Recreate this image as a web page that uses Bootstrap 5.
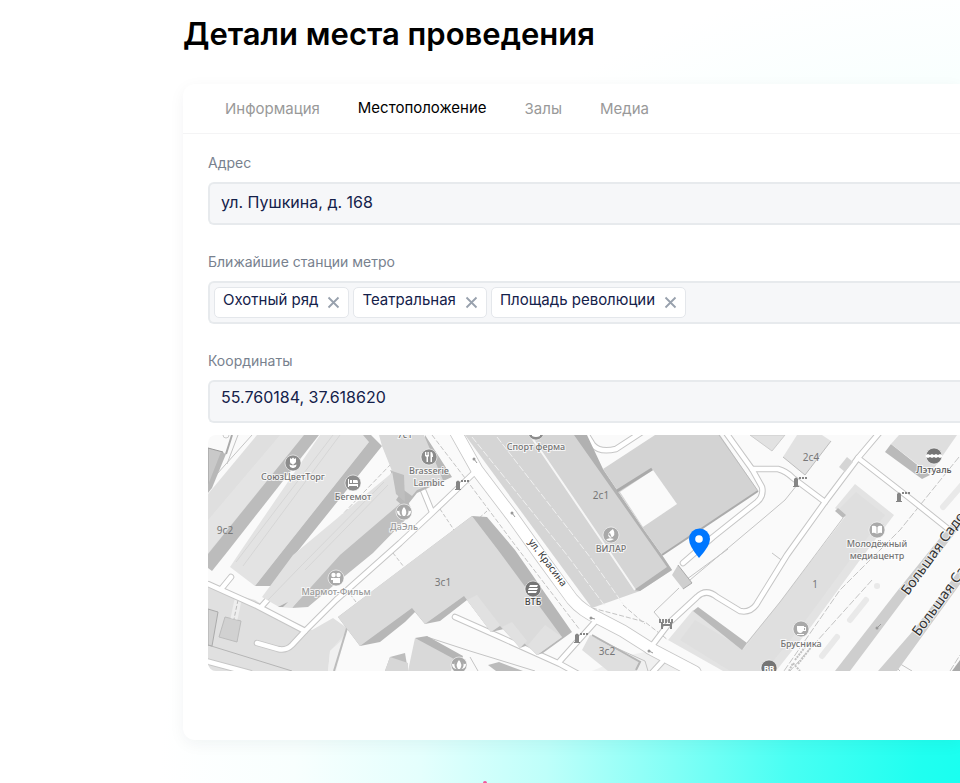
<!DOCTYPE html>
<html lang="ru">
<head>
<meta charset="utf-8">
<meta name="viewport" content="width=device-width, initial-scale=1">
<title>Детали места проведения</title>
<link href="https://cdn.jsdelivr.net/npm/bootstrap@5.3.0/dist/css/bootstrap.min.css" rel="stylesheet">
<style>
  body { font-family: Inter, "Noto Sans", sans-serif; background: #fff; color: #000; overflow-x: hidden; }
  .venue-page { min-height: 100vh; padding: 12px 0 0 183px;
    background: radial-gradient(840px 820px at calc(100% + 40px) 100%, #14fff0 0, #20fff0 10%, #48fff3 25%, #82fff6 39%, #beFFfa 54%, #e4fffd 69%, #f8fffe 84%, #fff 100%); }
  .venue-title { font-size: 31px; line-height: 44px; font-weight: 600; margin-bottom: 28px; white-space: nowrap; }
  .venue-card { border: 0; border-radius: 12px 0 0 12px; box-shadow: 0 4px 16px rgba(0, 40, 50, .05); padding-bottom: 69px; }
  .venue-tabs { gap: 38px; height: 50px; padding-left: 42px; border-bottom: 1px solid #f4f4f5; }
  .venue-tabs .nav-link { padding: 0; font-size: 15px; line-height: 24px; color: #999; }
  .venue-tabs .nav-link.active { color: #000; padding-bottom: 2px; }
  .venue-form { padding: 18px 0 0 25px; }
  .field-label { display: block; font-size: 14px; line-height: 22px; color: #78818e; margin-bottom: 8px; }
  .field-box, .field-box:focus { height: 43px; border: 2px solid #e7eaed; border-right: 0; border-radius: 6px 0 0 6px; background: #f6f7f9; color: #14214a; font-size: 16px; line-height: 24px; box-shadow: none; }
  input.field-box { padding: 3px 11px 6px; }
  input.coords { padding-bottom: 12px; }
  .field-group { margin-bottom: 26px; }
  .field-group.last { margin-bottom: 12px; }
  .tags-box { gap: 4px; padding: 4px; }
  .tag-item { height: 31px; border: 1px solid #e4e7eb; border-radius: 5px; background: #fff; padding: 0 8px; gap: 9px; white-space: nowrap; font-size: 15px; }
  .tag-text { padding-bottom: 5px; }
  .tag-remove { border: 0; background: none; padding: 0; width: 13px; height: 29px; line-height: 0; }
  .map-frame { overflow: hidden; border-radius: 8px 0 0 8px; }
  .venue-map { display: block; width: 100%; height: 236px; }
  .loader-tip { width: 4px; height: 2px; margin-left: 300px; border-radius: 2px 2px 0 0; background: #f0569a; }
</style>
</head>
<body>
<main class="venue-page d-flex flex-column">
  <h1 class="venue-title">Детали места проведения</h1>
  <section class="card venue-card">
    <ul class="nav flex-nowrap align-items-center venue-tabs">
      <li class="nav-item"><a class="nav-link" href="#info">Информация</a></li>
      <li class="nav-item"><a class="nav-link active" aria-current="page" href="#place">Местоположение</a></li>
      <li class="nav-item"><a class="nav-link" href="#halls">Залы</a></li>
      <li class="nav-item"><a class="nav-link" href="#media">Медиа</a></li>
    </ul>
    <form class="venue-form">
      <div class="field-group">
        <label class="field-label" for="address">Адрес</label>
        <input class="form-control field-box" id="address" type="text" value="ул. Пушкина, д. 168">
      </div>
      <div class="field-group" role="group" aria-labelledby="metro-label">
        <span class="field-label" id="metro-label">Ближайшие станции метро</span>
        <div class="field-box tags-box d-flex align-items-center">
          <span class="tag-item d-flex align-items-center"><span class="tag-text">Охотный ряд</span><button class="tag-remove" type="button" aria-label="Удалить Охотный ряд"><svg width="13" height="13" viewBox="0 0 13 13" stroke="#98a1ad" stroke-width="1.8"><path d="M1.5 1.5l10 10M11.500 1.500l-10 10"/></svg></button></span>
          <span class="tag-item d-flex align-items-center"><span class="tag-text">Театральная</span><button class="tag-remove" type="button" aria-label="Удалить Театральная"><svg width="13" height="13" viewBox="0 0 13 13" stroke="#98a1ad" stroke-width="1.8"><path d="M1.5 1.5l10 10M11.500 1.500l-10 10"/></svg></button></span>
          <span class="tag-item d-flex align-items-center"><span class="tag-text">Площадь революции</span><button class="tag-remove" type="button" aria-label="Удалить Площадь революции"><svg width="13" height="13" viewBox="0 0 13 13" stroke="#98a1ad" stroke-width="1.8"><path d="M1.5 1.5l10 10M11.500 1.500l-10 10"/></svg></button></span>
        </div>
      </div>
      <div class="field-group last">
        <label class="field-label" for="coords">Координаты</label>
        <input class="form-control field-box coords" id="coords" type="text" value="55.760184, 37.618620">
      </div>
      <div class="map-frame">
      <svg class="venue-map" viewBox="208 435 752 236" preserveAspectRatio="xMinYMin slice" role="img" aria-label="Карта места проведения">
        <defs>
          <g id="barrier"><path d="M-2 4v-7q2-3 4 0v7h1v1h-6v-1z" fill="#858585"/><path d="M3-4h9" stroke="#858585" stroke-width="2" stroke-dasharray="2 1"/></g>
          <path id="s-krasina" d="M454 429L477 470L512 516L542 558L572 599Q582 611 600 619L623 631L653 650L695 672"/>
          <g id="lanes">
            <path d="M208 584L257 606L305 631L292 645Q286 651 278 649L257 643"/>
            <path d="M305 631L336 600L400 543L432 513L477 470"/><path d="M432 512L423 490"/>
            <path d="M222 588L231 577M262 606L270 597"/>
            <path d="M455 617L500 637L560 664L580 675M560 661L594 623"/>
            <path d="M724 430L752 469L762 487Q764 496 757 502L713 537L683 563"/>
            <path d="M752 469L778 469Q786 471 793 478L825 502"/>
            <path d="M880 432L858 458L825 502L787 555L756 605Q750 613 740 611L717 597Q706 588 697 597L670 622L648 651"/>
            <path d="M858 458L912 500L947 528"/>
            <path d="M585 432L593 445Q600 453 616 449L642 432"/>
            <path d="M206 661L250 673M650 675L662 662"/>
          </g>
        </defs>
        <rect x="208" y="435" width="1600" height="236" fill="#fafafa"/>

        <!-- green areas and courtyards -->
        <path fill="#e0e0e0" d="M208 587L255 600L273 612L312 630L333 618L347 628L342 640L330 651L328 671H208z"/>
        <path fill="#e9e9e9" d="M330 651L346 632L336 671H328zM592 671L690 671L655 650L630 655z" opacity=".6"/>
        <path d="M347 628L334 671" stroke="#bcbcbc" stroke-width="2"/>
        <path d="M208 645L292 671" stroke="#b5b5b5" fill="none"/>
        <path d="M208 609L218 612L212 646L208 645z" fill="#d2d2d2" stroke="#aaa"/>
        <path d="M225 617L241 621L237 642L219 637z" fill="#d1d1d1" stroke="#bcbcbc"/>
        <path d="M238 600L234 619" stroke="#eee" stroke-width="7"/><path d="M238 600L234 619" stroke="#bbb" stroke-dasharray="4 2"/>

        <!-- thin paths -->
        <g fill="none" stroke="#c4c4c4" stroke-width="1">
          <path d="M208 484L252 435M227 464L238 435M379 507L394 466"/>
          <path d="M310 548L392 463M432 435L465 478L515 545L580 630" stroke-dasharray="5 2"/>
          <path d="M440 509L454 530M487 511L466 530M350 594L362 610M393 553L404 567" stroke-dasharray="4 2"/>
          <path d="M592 608L615 614L645 622L668 640M623 605L645 624" stroke-dasharray="5 2"/>
          <path d="M683 582L728 549M690 580L765 517L785 500L797 485M679 588L654 612L660 619"/>
          <path d="M959 457L900 530L840 590L784 671M872 580L790 671M770 435L790 420M950 671L960 655" stroke-dasharray="7 2"/>
          <path d="M897 662L912 671M900 671l-8-8M772 553l12 9"/>
          <path d="M427 637L470 651L535 671M470 657L478 671M592 637L645 661L648 671"/>
        </g>

        <!-- lanes with thin kerbs -->
        <g fill="none" stroke-linecap="round" stroke-linejoin="round">
          <use href="#lanes" stroke="#c6c6c6" stroke-width="6.500"/><use href="#s-krasina" stroke="#c6c6c6" stroke-width="13"/>
          <use href="#lanes" stroke="#fff" stroke-width="4.500"/><use href="#s-krasina" stroke="#fff" stroke-width="11.500"/>
        </g>

        <!-- western blocks -->
        <path d="M208 448L223 452L211 486L208 486z" fill="#c9c9c9" stroke="#999"/><path d="M221 452L226 454L212 488L208 493V485z" fill="#b8b8b8"/><path d="M226 454L232 435" stroke="#aaa" stroke-width="2"/><circle cx="226" cy="435" r="3" fill="none" stroke="#ccc"/>
        <path d="M257 435H305L208 556V494z" fill="#dfdfdf"/><path d="M280 435H304L208 553V520z" fill="#e4e4e4"/>
        <path d="M304 435H319L228 551L212 571L208 568V554z" fill="#bcbcbc"/>
        <path d="M320 435H370L369 442L281 553L255 586L230 567L240 552z" fill="#e3e3e3"/>
        <path d="M333 435L236 562M340 435L243 566" stroke="#d6d6d6" fill="none"/>
        <path d="M363 435H371L382 446L297 552L273 586H255L281 553L369 442z" fill="#bababa"/>
        <path d="M390 470L396 472L405 490L410 507V515L373 553L340 580L308 607L292 608L340 545L400 490z" fill="#bfbfbf"/>
        <path d="M393 472L399 491L402 502L340 555L292 608L279 607L262 597L293 555z" fill="#e2e2e2"/>
        <path d="M384 482L300 567L268 600M388 485L305 570" stroke="#d6d6d6" fill="none"/>
        <path d="M278 607L288 602L283 607z" fill="#b0b0b0"/>
        <path d="M425 435L452 477L417 493L405 508L396 500L404 488L423 480z" fill="#b8b8b8"/>
        <path d="M379 435H424L443 480L417 490L412 496L401 488L392 471L382 446z" fill="#d9d9d9"/>
        <path d="M392 471L404 475L405 502L396 494z" fill="#bebebe"/>

        <!-- building 3с1 -->
        <path d="M472 516L487 517L515 550L572 632L543 653L537 655L528 645L520 648L504 629L491 632L467 600L440 621L425 624L415 612L405 622L380 642L360 646L338 617z" fill="#b7b7b7"/>
        <path d="M472 516L498 550L562 637L537 655L524 643L520 648L500 626L491 632L464 596L425 624L412 608L360 646L338 617L400 570L420 555z" fill="#dbdbdb"/>
        <path d="M477 595L500 625L491 632L467 600zM512 622L527 641L520 648L502 627zM545 625L562 637L537 655L528 645z" fill="#e1e1e1"/>

        <!-- southern blocks -->
        <path d="M390 657L405 653L408 671H385z" fill="#bdbdbd"/><path d="M390 657L408 663V671H385z" fill="#d7d7d7"/>
        <path d="M415 638L427 636L463 656L460 664L450 668z" fill="#b5b5b5"/><path d="M415 638L454 659L451 671H408z" fill="#d9d9d9"/>
        <path d="M488 665L499 662L523 671H496z" fill="#bcbcbc"/>
        <path d="M590 635L640 663L636 671H608L582 650z" fill="#dfdfdf"/><path d="M592 635L640 662L636 670" fill="none" stroke="#b5b5b5" stroke-width="2"/>

        <!-- building 2с1 -->
        <path d="M465 435H577L662 555L672 570L640 591L592 608L553 555z" fill="#d5d5d5"/>
        <path d="M574 435H587L603 469L642 527L662 555L672 570L640 591L634 590L667 567z" fill="#b1b1b1"/>
        <path d="M532 438L600 538L635 590" stroke="#f6f6f6" stroke-width="2" fill="none"/>
        <path d="M472 437L567 555L605 606M497 437L590 557L623 604" stroke="#f1f1f1" stroke-dasharray="7 2" fill="none"/>
        <path d="M655 435H720L758 491L662 555L642 527L603 469z" fill="#d3d3d3"/>
        <path d="M620 492L653 470L677 504L643 527z" fill="#fafafa"/>
        <path d="M617 491L652 469" stroke="#aaa" stroke-width="3"/><path d="M758 491L662 555" stroke="#ababab" stroke-width="2"/><path d="M719 435L758 491" stroke="#bbb"/>
        <path d="M672 575L678 565L692 583L683 589z" fill="#cfcfcf"/><path d="M678 565L692 583L683 589" fill="none" stroke="#aaa"/>

        <!-- eastern blocks -->
        <path d="M750 435H785L772 451z" fill="#e2e2e2" stroke="#ccc"/>
        <path d="M797 435H822L831 441L805 475L783 457z" fill="#e2e2e2"/><path d="M831 441L805 475L783 457" fill="none" stroke="#bdbdbd"/>
        <path d="M847 457L853 462L845 472L839 467z" fill="#d5d5d5"/>
        <path d="M891 444L885 452L922 479L930 475z" fill="#bababa"/><path d="M899 435H957L930 474L891 444z" fill="#dedede"/>
        <path d="M855 484L894 515L860 560L810 628L776 671H723L668 640L693 610L742 648L780 602L845 517L835 508z" fill="#e3e3e3"/>
        <path d="M856 492L885 515L850 560L800 628L765 671H730L680 640L695 620L744 649L780 602L845 517L838 510z" fill="#dfdfdf"/>
        <path d="M698 607L747 643L742 650L693 611zM838 508L846 515L843 518L835 511z" fill="#bababa"/>
        <path d="M747 643L780 602L843 518" fill="none" stroke="#c5c5c5"/>
        <path d="M795 660l14-18M798 664l14-18M789 671l4-8 7 8" stroke="#c2c2c2" stroke-width="2" fill="none" stroke-dasharray="2 1"/>

        <!-- ring road -->
        <path d="M835 671H850L907 595L990 488H980L898 590zM878 671H897L990 543H980L912 632z" fill="#cecece"/><path d="M952 671L960 660H980V671z" fill="#aaa"/>
        <g stroke="#e9e9e9" stroke-width="6" stroke-linecap="round"><path d="M850 620L866 600M822 656L837 637M943 507L962 485M877 586h.1"/></g>
        <g fill="#999"><circle cx="877" cy="628" r="1.500"/><circle cx="474" cy="459" r="1.500"/><circle cx="512" cy="513" r="1.500"/><circle cx="591" cy="618" r="1.500"/><circle cx="649" cy="651" r="1.500"/></g>
        <path d="M877 628l4-4M474 459l3 4M512 513l3 4M591 618l4 1M649 651l4 2" stroke="#999"/>

        <use href="#barrier" x="458" y="485"/><use href="#barrier" x="577" y="638"/><use href="#barrier" x="796" y="482"/><use href="#barrier" x="899" y="497"/>
        <path d="M659 621h15" stroke="#8b8b8b" stroke-width="4" stroke-dasharray="2 1"/><path d="M662 622v7M671 622v7M661 625h11" stroke="#858585" stroke-width="2"/>

        <!-- place markers -->
        <g stroke="#fff" stroke-opacity=".6">
          <g fill="#8c8c8c"><circle cx="293" cy="463" r="8"/><circle cx="353" cy="483" r="8"/><circle cx="429" cy="457" r="8"/><circle cx="536" cy="432" r="8"/></g>
          <g fill="#a9a9a9"><circle cx="336" cy="578" r="8"/><circle cx="404" cy="512" r="8"/><circle cx="611" cy="535" r="8"/><circle cx="459" cy="665" r="8"/><circle cx="877" cy="530" r="8"/><circle cx="801" cy="629" r="8"/></g>
          <g fill="#757575"><circle cx="533" cy="589" r="8"/><circle cx="934" cy="456" r="8"/><circle cx="769" cy="668" r="8"/></g>
        </g>
        <g fill="#fff">
          <path d="M290 458l1.500 1 1.500-1.500 1.500 1.500 1.500-1v4q-1 2-2.500 2v1.500l3-1q0 3-3 3.500h-1q-3-.5-3-3.500l3 1V464q-2.500 0-2.500-2z"/>
          <path d="M348 479h1v5h9v3h-1v-1h-8v1h-1zM350 480h2v3h-2zM353 480h4q1 0 1 3h-5z"/>
          <path d="M425 452h1v3h.7v-3h.8v3h.7v-3h.8v4l-1 1v5h-1.500v-5l-1.500-1zM431 452q2 0 2 5h-1v5h-1.500v-10z"/>
          <circle cx="333.500" cy="575" r="2.200"/><circle cx="338.500" cy="575" r="2.200"/><path d="M333 578h7v5h-7zM331 578h2v2h-2z"/>
          <g id="tulip"><path d="M404 507q-4 4.500-1 9h2q3-4.500-1-9M400.500 508.500q-2.500 4.500 1 7.500-4.500-.5-4.500-5 1.500-.5 2 .5zM407.500 508.500q2.500 4.500-1 7.500 4.500-.5 4.500-5-1.500-.5-2 .5z"/></g><use href="#tulip" x="55" y="153"/>
          <path d="M613 529q-8 5-3 9 7-2 3-9M614 539q-6-2-8 1 4 2 8-1" /><path d="M608 534l4 4-2-5z" fill="#a9a9a9"/>
          <path d="M530 585h8l-1 2h-8zM529 588h9l-1 2h-9zM528 591h9l-1 2h-8z"/>
          <path d="M926 455l2-1 2 1 2-1 2 1 2-1 2 1 2-1 2 1v2l-2 1-2-1-2 1-2-1-2 1-2-1-2 1-2-1z"/>
          <path d="M872 526q3-1 4.500 1v7q-2-2-4.500-1zM882 526q-3-1-4.500 1v7q2-2 4.500-1z"/>
          <path d="M797 626h7v1h2v4h-3q-1 2-2.500 2-3.500 0-3.500-4zM804 628v2h1v-2zM797 634h7v1h-7z" fill-rule="evenodd"/>
          <path d="M532 434q4 2 8 0v2q-4 2-8 0z"/>
        </g>

        <!-- captions -->
        <g font-family="'Noto Sans', sans-serif" font-size="9" font-weight="500" text-anchor="middle" fill="#747474" stroke="#fff" stroke-opacity=".75" stroke-width="2" paint-order="stroke">
          <text x="293" y="480">СоюзЦветТорг</text><text x="353" y="500">Бегемот</text>
          <text x="429" y="474">Brasserie</text><text x="429" y="486">Lambic</text>
          <text x="536" y="450">Спорт ферма</text><text x="404" y="530" fill="#999">ДаЭль</text>
          <text x="336" y="595" fill="#999">Мармот-Фильм</text><text x="611" y="552">ВИЛАР</text>
          <text x="533" y="605" fill="#444">ВТБ</text><text x="934" y="473" fill="#555">Лэтуаль</text>
          <text x="877" y="547">Молодёжный</text><text x="877" y="559">медиацентр</text><text x="801" y="647">Брусника</text>
          <text x="405" y="438">7с1</text>
        </g>
        <g font-family="'Noto Sans', sans-serif" font-size="10" text-anchor="middle" fill="#777">
          <text x="225" y="534">9с2</text><text x="443" y="586">3с1</text><text x="601" y="499">2с1</text><text x="811" y="461">2с4</text><text x="607" y="655">3с2</text><text x="815" y="588">1</text>
        </g>
        <text x="769" y="672" font-family="'Noto Sans', sans-serif" font-size="8" font-weight="700" text-anchor="middle" fill="#fff">BB</text>
        <g font-family="'Noto Sans', sans-serif" fill="#333" stroke="#fff" stroke-opacity=".7" stroke-width="2" paint-order="stroke">
          <text transform="translate(528 542) rotate(53)" font-size="10">ул. Красина</text>
          <text transform="translate(908 596) rotate(-54)" font-size="14">Большая Садовая</text>
          <text transform="translate(919 637) rotate(-54)" font-size="14">Большая Садовая</text>
        </g>

        <path d="M699 558Q689 546 689 539A10.300 10.300 0 0 1 710 539Q710 546 699 558z" fill="#0077ff"/><circle cx="699" cy="539" r="3.800" fill="#fff"/>
      </svg>
      </div>
    </form>
  </section>
  <div class="mt-auto loader-tip"></div>
</main>
<script src="https://cdn.jsdelivr.net/npm/bootstrap@5.3.0/dist/js/bootstrap.bundle.min.js"></script>
</body>
</html>
